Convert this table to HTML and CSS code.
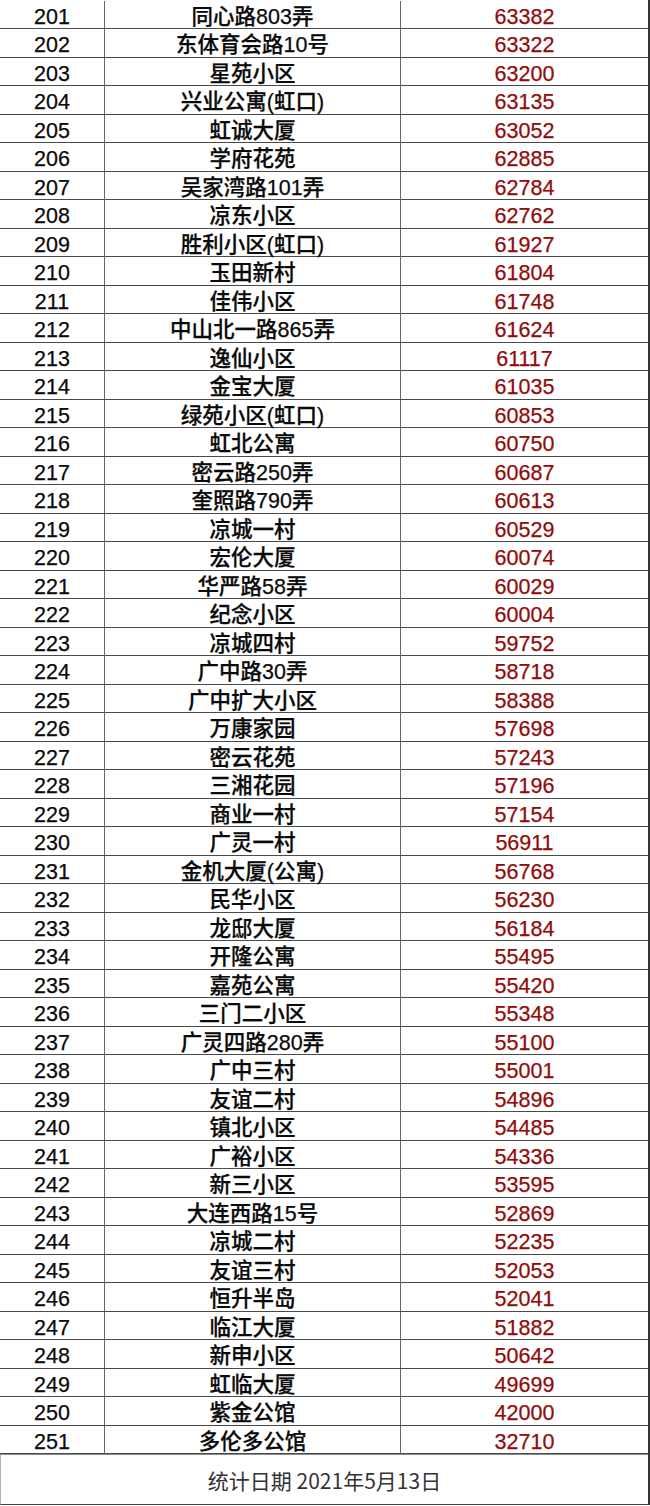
FILE: index.html
```html
<!DOCTYPE html>
<html lang="zh-CN">
<head>
<meta charset="utf-8">
<title>统计</title>
<link rel="stylesheet" href="styles.css">
</head>
<body>
<div class="sheet">
<div class="row"><div class="c-no">201</div><div class="c-name">同心路803弄</div><div class="c-val">63382</div></div>
<div class="row"><div class="c-no">202</div><div class="c-name">东体育会路10号</div><div class="c-val">63322</div></div>
<div class="row"><div class="c-no">203</div><div class="c-name">星苑小区</div><div class="c-val">63200</div></div>
<div class="row"><div class="c-no">204</div><div class="c-name">兴业公寓(虹口)</div><div class="c-val">63135</div></div>
<div class="row"><div class="c-no">205</div><div class="c-name">虹诚大厦</div><div class="c-val">63052</div></div>
<div class="row"><div class="c-no">206</div><div class="c-name">学府花苑</div><div class="c-val">62885</div></div>
<div class="row"><div class="c-no">207</div><div class="c-name">吴家湾路101弄</div><div class="c-val">62784</div></div>
<div class="row"><div class="c-no">208</div><div class="c-name">凉东小区</div><div class="c-val">62762</div></div>
<div class="row"><div class="c-no">209</div><div class="c-name">胜利小区(虹口)</div><div class="c-val">61927</div></div>
<div class="row"><div class="c-no">210</div><div class="c-name">玉田新村</div><div class="c-val">61804</div></div>
<div class="row"><div class="c-no">211</div><div class="c-name">佳伟小区</div><div class="c-val">61748</div></div>
<div class="row"><div class="c-no">212</div><div class="c-name">中山北一路865弄</div><div class="c-val">61624</div></div>
<div class="row"><div class="c-no">213</div><div class="c-name">逸仙小区</div><div class="c-val">61117</div></div>
<div class="row"><div class="c-no">214</div><div class="c-name">金宝大厦</div><div class="c-val">61035</div></div>
<div class="row"><div class="c-no">215</div><div class="c-name">绿苑小区(虹口)</div><div class="c-val">60853</div></div>
<div class="row"><div class="c-no">216</div><div class="c-name">虹北公寓</div><div class="c-val">60750</div></div>
<div class="row"><div class="c-no">217</div><div class="c-name">密云路250弄</div><div class="c-val">60687</div></div>
<div class="row"><div class="c-no">218</div><div class="c-name">奎照路790弄</div><div class="c-val">60613</div></div>
<div class="row"><div class="c-no">219</div><div class="c-name">凉城一村</div><div class="c-val">60529</div></div>
<div class="row"><div class="c-no">220</div><div class="c-name">宏伦大厦</div><div class="c-val">60074</div></div>
<div class="row"><div class="c-no">221</div><div class="c-name">华严路58弄</div><div class="c-val">60029</div></div>
<div class="row"><div class="c-no">222</div><div class="c-name">纪念小区</div><div class="c-val">60004</div></div>
<div class="row"><div class="c-no">223</div><div class="c-name">凉城四村</div><div class="c-val">59752</div></div>
<div class="row"><div class="c-no">224</div><div class="c-name">广中路30弄</div><div class="c-val">58718</div></div>
<div class="row"><div class="c-no">225</div><div class="c-name">广中扩大小区</div><div class="c-val">58388</div></div>
<div class="row"><div class="c-no">226</div><div class="c-name">万康家园</div><div class="c-val">57698</div></div>
<div class="row"><div class="c-no">227</div><div class="c-name">密云花苑</div><div class="c-val">57243</div></div>
<div class="row"><div class="c-no">228</div><div class="c-name">三湘花园</div><div class="c-val">57196</div></div>
<div class="row"><div class="c-no">229</div><div class="c-name">商业一村</div><div class="c-val">57154</div></div>
<div class="row"><div class="c-no">230</div><div class="c-name">广灵一村</div><div class="c-val">56911</div></div>
<div class="row"><div class="c-no">231</div><div class="c-name">金机大厦(公寓)</div><div class="c-val">56768</div></div>
<div class="row"><div class="c-no">232</div><div class="c-name">民华小区</div><div class="c-val">56230</div></div>
<div class="row"><div class="c-no">233</div><div class="c-name">龙邸大厦</div><div class="c-val">56184</div></div>
<div class="row"><div class="c-no">234</div><div class="c-name">开隆公寓</div><div class="c-val">55495</div></div>
<div class="row"><div class="c-no">235</div><div class="c-name">嘉苑公寓</div><div class="c-val">55420</div></div>
<div class="row"><div class="c-no">236</div><div class="c-name">三门二小区</div><div class="c-val">55348</div></div>
<div class="row"><div class="c-no">237</div><div class="c-name">广灵四路280弄</div><div class="c-val">55100</div></div>
<div class="row"><div class="c-no">238</div><div class="c-name">广中三村</div><div class="c-val">55001</div></div>
<div class="row"><div class="c-no">239</div><div class="c-name">友谊二村</div><div class="c-val">54896</div></div>
<div class="row"><div class="c-no">240</div><div class="c-name">镇北小区</div><div class="c-val">54485</div></div>
<div class="row"><div class="c-no">241</div><div class="c-name">广裕小区</div><div class="c-val">54336</div></div>
<div class="row"><div class="c-no">242</div><div class="c-name">新三小区</div><div class="c-val">53595</div></div>
<div class="row"><div class="c-no">243</div><div class="c-name">大连西路15号</div><div class="c-val">52869</div></div>
<div class="row"><div class="c-no">244</div><div class="c-name">凉城二村</div><div class="c-val">52235</div></div>
<div class="row"><div class="c-no">245</div><div class="c-name">友谊三村</div><div class="c-val">52053</div></div>
<div class="row"><div class="c-no">246</div><div class="c-name">恒升半岛</div><div class="c-val">52041</div></div>
<div class="row"><div class="c-no">247</div><div class="c-name">临江大厦</div><div class="c-val">51882</div></div>
<div class="row"><div class="c-no">248</div><div class="c-name">新申小区</div><div class="c-val">50642</div></div>
<div class="row"><div class="c-no">249</div><div class="c-name">虹临大厦</div><div class="c-val">49699</div></div>
<div class="row"><div class="c-no">250</div><div class="c-name">紫金公馆</div><div class="c-val">42000</div></div>
<div class="row"><div class="c-no">251</div><div class="c-name">多伦多公馆</div><div class="c-val">32710</div></div>
<div class="footer">统计日期 2021年5月13日</div>
</div>
</body>
</html>
```
FILE: styles.css
```css
html, body {
  margin: 0;
  padding: 0;
  background: #ffffff;
}
.sheet {
  width: 650px;
  box-sizing: border-box;
  border-right: 2px solid #333333;
  padding-top: 0.5px;
}
.row {
  display: grid;
  grid-template-columns: 105px 296px 1fr;
  height: 28.5px;
  box-sizing: border-box;
  border-bottom: 1px solid #4a4a4a;
  font-family: "Liberation Sans", "Noto Sans CJK SC", sans-serif;
  font-size: 21.5px;
  font-weight: 500;
  color: #0a0a0a;
  -webkit-text-stroke: 0.25px currentColor;
}
.row > div {
  text-align: center;
  line-height: 24px;
  padding-top: 4px;
  white-space: nowrap;
}
.c-no, .c-name {
  border-right: 1px solid #666666;
}
.c-val {
  color: #920b0b;
}
.footer {
  height: 51px;
  box-sizing: border-box;
  border-top: 1px solid #8a8a8a;
  border-left: 1px solid #b0b0b0;
  border-bottom: 1px solid #444444;
  display: flex;
  align-items: center;
  justify-content: center;
  font-family: "Noto Sans CJK SC", sans-serif;
  font-size: 21px;
  color: #333333;
}
```
